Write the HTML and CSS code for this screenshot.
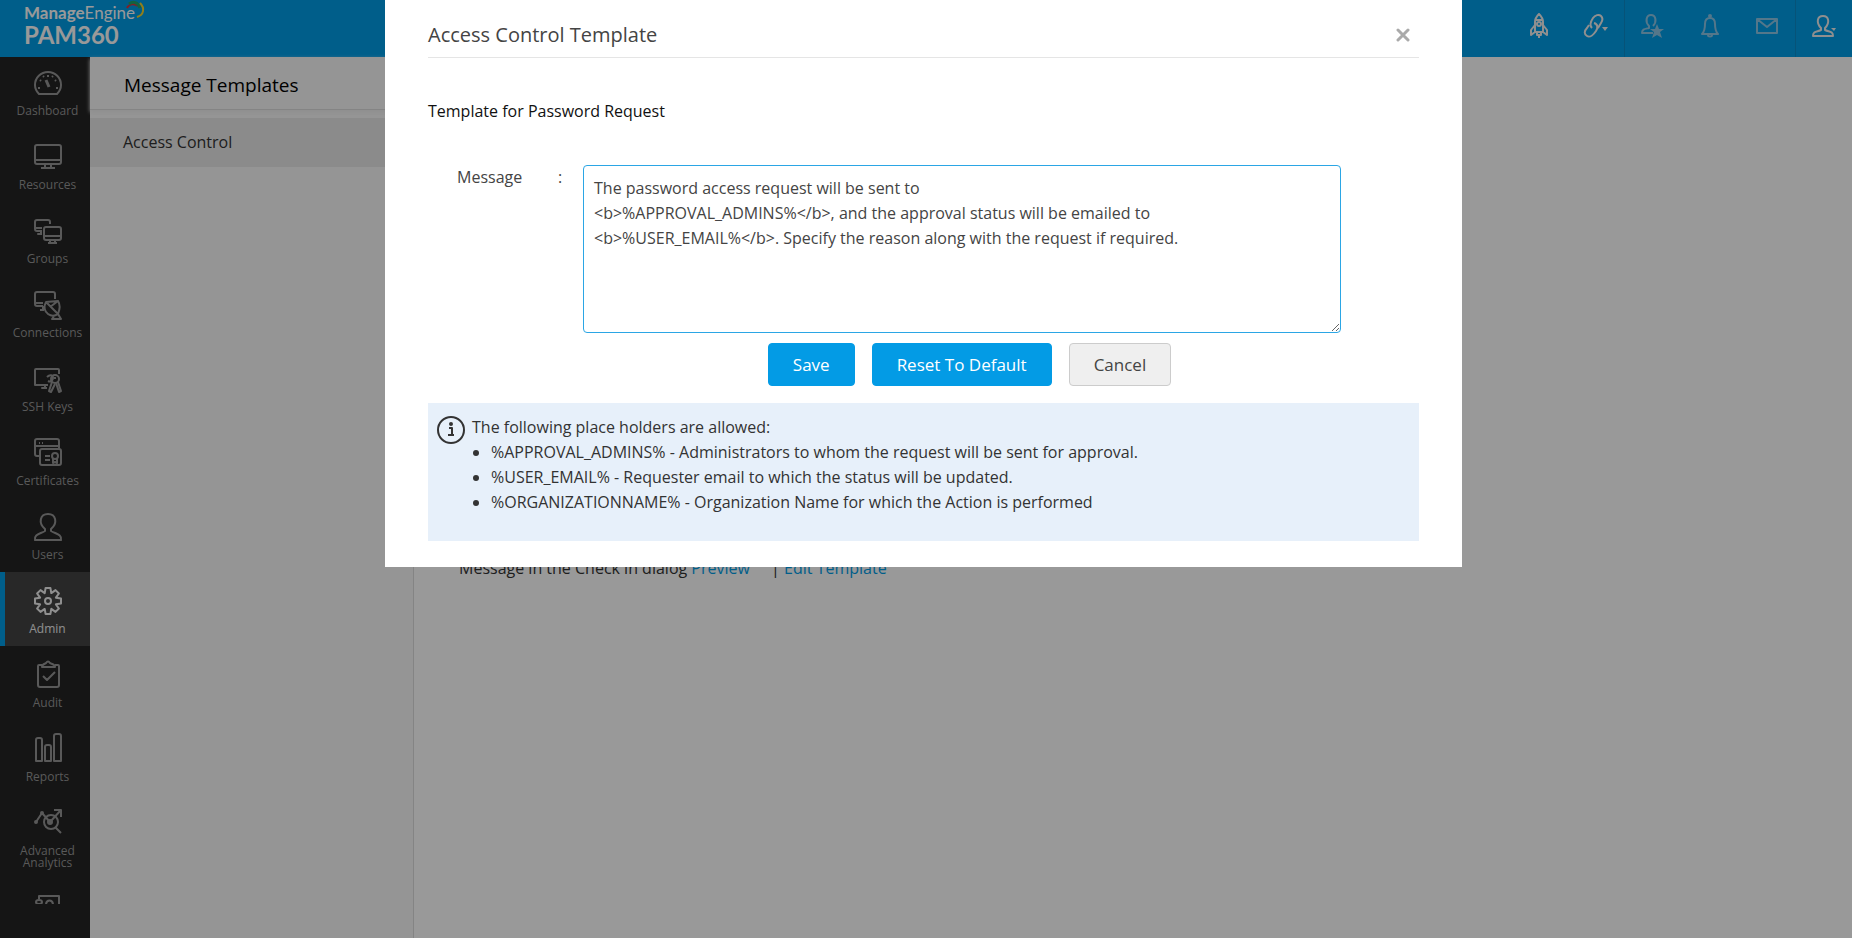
FILE: index.html
```html
<!DOCTYPE html>
<html lang="en">
<head>
    <meta charset="UTF-8">
    <meta name="viewport" content="width=device-width, initial-scale=1.0">
    <title>ManageEngine PAM360</title>
    <link rel="stylesheet" href="styles.css">
</head>
<body>
    <!-- Top bar -->
    <header class="topbar">
        <a class="logo" href="#">
            <span class="logo-company"><b>Manage</b>Engine<svg class="logo-swoosh" viewBox="0 0 20 20" aria-hidden="true">
                <path d="M2 8C4 4 9 3 13 6" stroke="#d8343f" stroke-width="2"/>
                <path d="M4 4C8 1 13 2 15 8" stroke="#1fa56b" stroke-width="3"/>
                <path d="M15 3C20 8 19 15 12 17" stroke="#f0d32c" stroke-width="2"/>
            </svg></span>
            <span class="logo-product">PAM360</span>
        </a>
        <nav class="top-actions">
            <button class="top-button" type="button" aria-label="Quick start">
                <svg width="18" height="26" viewBox="0 0 18 26"><path d="M5 19V9C5 5 7 3 9 1c2 2 4 4 4 8v10zM5 12l-4 5v5l4-3M13 12l4 5v5l-4-3M6 7h6M7 19v3h4v-3M9 23v2"/><circle cx="9" cy="11" r="2"/></svg>
            </button>
            <button class="top-button" type="button" aria-label="Links">
                <svg width="26" height="26" viewBox="0 0 26 26"><path d="M9 15C6 12 8 8 10 5s6-4 8-2 2 4 0 7l-3 5M11 10c4 1 4 5 2 8s-6 7-9 5-3-5 0-8l2-3"/><path class="solid" d="M19 14h6l-3 4z"/></svg>
            </button>
            <button class="top-button divided faded" type="button" aria-label="Favourites">
                <svg width="24" height="26" viewBox="0 0 24 26"><path d="M12 20H1c0-4 3-4 7-5v-2C4 9 5 2 10 2s6 7 2 11"/><path class="solid" d="M16 11l2 5h5l-4 3 2 6-5-3-5 3 2-6-4-3h5z"/></svg>
            </button>
            <button class="top-button faded" type="button" aria-label="Notifications">
                <svg width="18" height="24" viewBox="0 0 18 24"><path d="M1 20c2-2 3-4 3-10 0-4 2-6 5-6s5 2 5 6c0 6 1 8 3 10zM7 21c0 2 4 2 4 0"/><circle cx="9" cy="2" r="1"/></svg>
            </button>
            <button class="top-button faded" type="button" aria-label="Messages">
                <svg width="22" height="16" viewBox="0 0 22 16"><path d="M1 1h20v14H1zM1 1l10 8 10-8"/></svg>
            </button>
            <button class="top-button divided" type="button" aria-label="My account">
                <svg width="24" height="24" viewBox="0 0 24 24"><path d="M1 22c0-5 4-4 8-6v-2C4 9 5 2 11 2s7 7 2 12v2c4 2 8 1 8 6z"/><path class="solid" d="M19 14h5l-2 3z"/></svg>
            </button>
        </nav>
    </header>

    <div class="page">
        <!-- Main menu -->
        <nav class="sidebar">
            <ul class="menu">
                <li><a href="#"><svg class="icon" viewBox="0 0 28 28"><path d="M5 25C2 22 1 19 1 16a13 13 0 0 1 26 0c0 3-1 6-4 9z"/><path d="M12 11l3 7" stroke-width="3"/><path d="M4 19h2M22 19h2M6 11l1 1M21 11l1 1M14 6v2M9 7l1 1M18 8l1-1"/></svg>Dashboard</a></li>
                <li><a href="#"><svg class="icon" viewBox="0 0 28 28"><rect x="1" y="2" width="26" height="19" rx="2"/><path d="M1 17h26M11 21v4M17 21v4M7 25h14"/></svg>Resources</a></li>
                <li><a href="#"><svg class="icon" viewBox="0 0 28 28"><path d="M16 7V5q0-2-2-2H3Q1 3 1 5v7q0 2 2 2h5M1 11h7M7 14v3H4h4"/><rect x="10" y="10" width="17" height="13" rx="2"/><path d="M10 19h17M16 23v3M21 23v3M14 26h9"/></svg>Groups</a></li>
                <li><a href="#"><svg class="icon" viewBox="0 0 28 28"><path d="M21 8V3q0-2-2-2H3Q1 1 1 3v10q0 2 2 2h6M1 12h8M9 15v4M6 19h4"/><path d="M12 11c-3 5-1 10 2 12s7 2 10 0zM12 11l12-1-8 6M24 10c2 3 2 8 0 13M21 24l-3 4h9l-3-5"/></svg>Connections</a></li>
                <li><a href="#"><svg class="icon" viewBox="0 0 28 28"><path d="M25 9V5q0-1-1-1H2Q1 4 1 5v15h13M11 21v2H8h5"/><path d="M13 12c3-3 6-2 6 1s-3 4-5 3M18 17l-3 9 2 1 4-8"/><circle cx="21" cy="14" r="4"/><path d="M22 18l3 9 2-1-3-9M21 12v2"/></svg>SSH Keys</a></li>
                <li><a href="#"><svg class="icon" viewBox="0 0 28 28"><path d="M25 10V2q0-2-2-2H3Q1 0 1 2v13q0 2 2 2h3M1 7h24M5 4h1M8 4h1"/><rect x="6" y="10" width="21" height="16" rx="2"/><path d="M11 17h5M11 21h5M19 20v4l2-1 2 1v-4"/><circle cx="21" cy="17" r="3"/></svg>Certificates</a></li>
                <li><a href="#"><svg class="icon" viewBox="0 0 28 28"><path d="M1 27c-1-6 5-6 10-9v-2C4 10 6 1 14 1s10 9 3 15v2c5 3 11 3 10 9z"/></svg>Users</a></li>
                <li><a class="active" href="#"><svg class="icon" viewBox="-14 -14 28 28"><path d="M-2.4-13L2.4-13 3.3-7.9 7.5-10.9 10.9-7.5 7.9-3.3 13-2.4 13 2.4 7.9 3.3 10.9 7.5 7.5 10.9 3.3 7.9 2.4 13-2.4 13-3.3 7.9-7.5 10.9-10.9 7.5-7.9 3.3-13 2.4-13-2.4-7.9-3.3-10.9-7.5-7.5-10.9-3.3-7.9z"/><circle r="3"/></svg>Admin</a></li>
                <li><a href="#"><svg class="icon" viewBox="0 0 28 28"><path d="M8 4H5Q4 4 4 5v19q0 2 2 2h17q2 0 2-2V5q0-1-1-1h-3"/><path d="M8 6c0-3 3-3 4-4q2-3 4 0c1 1 5 1 5 4zM9 15l4 4 8-8"/></svg>Audit</a></li>
                <li><a href="#"><svg class="icon" viewBox="0 0 28 28"><path d="M2 26V5q0-2 2-2h2q2 0 2 2v21zM11 26V12q0-2 2-2h2q2 0 2 2v14zM20 26V1q0-2 2-2h3q2 0 2 2v25z"/></svg>Reports</a></li>
                <li><a href="#"><svg class="icon" viewBox="0 0 28 28"><path d="M2 13l6-9 8 9L27 1M20 1h7v7M21 18l6 6"/><circle cx="17" cy="13" r="7"/><circle class="dot" cx="16" cy="13" r="2"/><circle class="dot" cx="2" cy="13" r="1"/><circle class="dot" cx="8" cy="4" r="1"/></svg>Advanced<br>Analytics</a></li>
                <li><a href="#" aria-label="More"><svg class="icon" viewBox="0 0 28 28"><path d="M5 4V1h20v20H5M12 10c0-6 7-6 7 0"/><ellipse cx="5" cy="7" rx="3" ry="2"/></svg></a></li>
            </ul>
        </nav>

        <!-- Template categories -->
        <aside class="categories">
            <h1>Message Templates</h1>
            <a class="category" href="#">Access Control</a>
        </aside>

        <main class="content">
            <p>Message in the Check in dialog <a href="#">Preview</a> <span class="separator">|</span> <a href="#">Edit Template</a></p>
        </main>
    </div>

    <!-- Edit template dialog -->
    <div class="overlay">
        <section class="dialog" role="dialog" aria-labelledby="dialogTitle">
            <div class="dialog-header">
                <h2 id="dialogTitle">Access Control Template</h2>
                <button class="close-button" type="button" aria-label="Close">
                    <svg width="14" height="14" viewBox="0 0 14 14"><path d="M2 2l10 10M12 2L2 12"/></svg>
                </button>
            </div>
            <h3>Template for Password Request</h3>
            <form>
                <div class="field">
                    <label for="message">Message</label>
                    <span>:</span>
                    <textarea id="message" name="message" spellcheck="false">The password access request will be sent to
&lt;b&gt;%APPROVAL_ADMINS%&lt;/b&gt;, and the approval status will be emailed to
&lt;b&gt;%USER_EMAIL%&lt;/b&gt;. Specify the reason along with the request if required.</textarea>
                </div>
                <div class="buttons">
                    <button class="primary" type="submit">Save</button>
                    <button class="primary" type="button">Reset To Default</button>
                    <button type="button">Cancel</button>
                </div>
            </form>
            <div class="info">
                <svg class="info-icon" viewBox="0 0 28 28" aria-hidden="true"><circle cx="14" cy="15" r="13"/><path d="M12 13h3v7M11 20h6"/><circle class="dot" cx="14" cy="9" r="1"/></svg>
                <div>
                    <p>The following place holders are allowed:</p>
                    <ul>
                        <li>%APPROVAL_ADMINS% - Administrators to whom the request will be sent for approval.</li>
                        <li>%USER_EMAIL% - Requester email to which the status will be updated.</li>
                        <li>%ORGANIZATIONNAME% - Organization Name for which the Action is performed</li>
                    </ul>
                </div>
            </div>
        </section>
    </div>
</body>
</html>
```
FILE: styles.css
```css
* {
    box-sizing: border-box;
}
body {
    display: flex;
    flex-direction: column;
    height: 100vh;
    margin: 0;
    overflow: hidden;
    font-family: "Open Sans", sans-serif;
    font-size: 16px;
    line-height: 25px;
    color: #333;
    background-color: #fff;
}
h1, h2, h3, p, ul {
    margin: 0;
    padding: 0;
    font-weight: normal;
}
a {
    color: #009de7;
    text-decoration: none;
}
button {
    font-family: inherit;
    cursor: pointer;
}
svg {
    fill: none;
    stroke: currentColor;
    stroke-linejoin: round;
}

/* top bar */
.topbar {
    display: flex;
    justify-content: space-between;
    flex: none;
    height: 57px;
    background-color: #009de7;
}
.logo {
    display: flex;
    flex-direction: column;
    padding: 4px 0 0 24px;
    font-family: Lato, sans-serif;
    color: #fff;
}
.logo-company {
    display: flex;
    font-size: 17px;
    line-height: 18px;
}
.logo-swoosh {
    width: 20px;
    height: 20px;
    margin: -4px 0 0 -10px;
}
.logo-product {
    font-size: 24px;
    font-weight: bold;
    line-height: 26px;
}
.top-actions {
    display: flex;
}
.top-button {
    display: flex;
    align-items: center;
    justify-content: center;
    width: 57px;
    padding: 0 0 5px;
    border: none;
    background: none;
    color: #eee;
    stroke-width: 2;
}
.faded {
    color: #8cc6e6;
}
.divided {
    border-left: 1px solid #0b8bc9;
}
.solid, .dot {
    fill: currentColor;
}
.solid {
    stroke: none;
}

.page {
    display: flex;
    flex: 1;
    min-height: 0;
}

/* main menu */
.sidebar {
    flex: none;
    width: 90px;
    padding-bottom: 34px;
    background-color: #232323;
}
.menu {
    height: 100%;
    overflow: hidden;
    list-style: none;
}
.menu li:first-child {
    margin-top: -3px;
}
.menu a {
    display: block;
    padding: 15px 0 11px;
    border-left: 5px solid transparent;
    font-size: 12px;
    line-height: 12px;
    text-align: center;
    white-space: nowrap;
    color: #959595;
}
.menu a.active {
    border-color: #009de7;
    background-color: #444;
    color: #eee;
}
.icon {
    display: block;
    width: 28px;
    height: 28px;
    margin: 0 auto 8px;
    overflow: visible;
    stroke-width: 2;
}

/* template categories */
.categories {
    flex: none;
    width: 324px;
    border-right: 1px solid #ddd;
    background-color: #f8f8f8;
}
.categories h1 {
    height: 53px;
    margin-bottom: 8px;
    padding-left: 34px;
    border-bottom: 1px solid #ddd;
    box-shadow: 0 2px 4px #eee;
    font-size: 19px;
    line-height: 56px;
    color: #000;
}
.category {
    display: block;
    padding-left: 33px;
    background-color: #e8e8e8;
    line-height: 49px;
    color: #333;
}

.content {
    flex: 1;
    padding: 499px 45px 0;
}
.separator {
    margin-left: 17px;
}

/* dialog */
.overlay {
    position: fixed;
    inset: 0;
    padding-right: 5px;
    background-color: rgba(0, 0, 0, 0.4);
}
.dialog {
    width: 1077px;
    max-width: 100%;
    margin: 0 auto;
    padding: 0 43px 26px;
    background-color: #fff;
}
.dialog-header {
    display: flex;
    align-items: center;
    justify-content: space-between;
    height: 58px;
    padding-top: 12px;
    border-bottom: 1px solid #e5e5e5;
}
.dialog h2 {
    font-size: 20px;
    color: #444;
}
.close-button {
    display: flex;
    padding: 9px;
    border: none;
    background: none;
    color: #aaa;
    stroke-linecap: round;
    stroke-width: 3;
}
.dialog h3 {
    padding: 41px 0;
    font-size: 16px;
    color: #111;
}
.field {
    display: flex;
    padding-left: 29px;
}
.field label {
    width: 101px;
}
.field span {
    width: 25px;
}
.field label, .field span {
    color: #444;
}
textarea {
    width: 758px;
    height: 168px;
    padding: 10px;
    border: 1px solid #2ba6e5;
    border-radius: 4px;
    outline: none;
    font: inherit;
    color: #444;
}
.buttons {
    display: flex;
    justify-content: center;
    gap: 17px;
    padding: 10px 0 17px 92px;
}
.buttons button {
    height: 43px;
    padding: 0 24px;
    border: 1px solid #ccc;
    border-radius: 4px;
    background-color: #efefef;
    font-size: 17px;
    color: #444;
}
.buttons .primary {
    border-color: #039be5;
    background-color: #039be5;
    color: #fff;
}
.info {
    display: flex;
    gap: 7px;
    padding: 12px 9px 26px;
    background-color: #e7f0fa;
}
.info-icon {
    width: 28px;
    height: 28px;
    overflow: visible;
    stroke-width: 2;
}
.info ul {
    padding-left: 19px;
}
```
